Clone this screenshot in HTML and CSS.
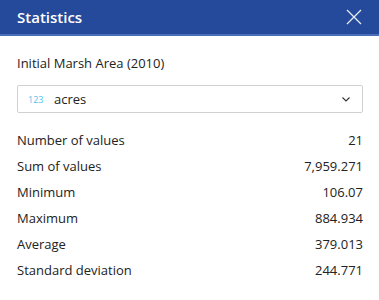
FILE: index.html
```html
<!DOCTYPE html>
<html lang="en">
<head>
    <meta charset="UTF-8">
    <meta name="viewport" content="width=device-width, initial-scale=1.0">
    <title>Statistics</title>
    <link rel="stylesheet" href="styles.css">
</head>
<body>

    <div class="panel">
        <div class="header">
            <h2>Statistics</h2>
            <button class="close" aria-label="Close">
                <svg width="16" height="16" viewBox="0 0 16 16">
                    <path d="M1 1 L15 15 M15 1 L1 15" stroke="#e8ecf6" stroke-width="1.3" fill="none"/>
                </svg>
            </button>
        </div>

        <div class="content">
            <p class="field-name">Initial Marsh Area (2010)</p>

            <!-- Field picker -->
            <div class="select">
                <span class="type">123</span>
                <span class="unit">acres</span>
                <svg class="chevron" width="8" height="5" viewBox="0 0 8 5">
                    <path d="M0.5 0.5 L4 4 L7.5 0.5" stroke="#333" stroke-width="1.1" fill="none"/>
                </svg>
            </div>

            <table class="stats">
                <tr><td>Number of values</td><td>21</td></tr>
                <tr><td>Sum of values</td><td>7,959.271</td></tr>
                <tr><td>Minimum</td><td>106.07</td></tr>
                <tr><td>Maximum</td><td>884.934</td></tr>
                <tr><td>Average</td><td>379.013</td></tr>
                <tr><td>Standard deviation</td><td>244.771</td></tr>
            </table>
        </div>
    </div>

</body>
</html>
```

FILE: styles.css
```css
body {
    margin: 0;
    font-family: "Open Sans", "Noto Sans", sans-serif;
    background-color: white;
    color: #222;
}

.panel {
    width: 379px;
}

.header {
    height: 34px;
    background-color: #254a9b;
    border-bottom: 2px solid #4a6fb8;
    display: flex;
    align-items: center;
    justify-content: space-between;
    padding: 0 17px;
}

.header h2 {
    margin: 0;
    font-size: 15px;
    font-weight: 600;
    color: white;
}

.close {
    background: none;
    border: none;
    padding: 0;
    width: 16px;
    height: 16px;
    cursor: pointer;
}

.content {
    padding: 0 16px 0 17px;
}

.field-name {
    margin: 17px 0 0;
    font-size: 13px;
    line-height: 20px;
}

.select {
    margin-top: 12px;
    height: 26px;
    border: 1px solid #d0d0d0;
    border-radius: 2px;
    display: flex;
    align-items: center;
    padding: 0 12px 0 10px;
    font-size: 13px;
}

.type {
    font-size: 9px;
    color: #4fc3ee;
    width: 26px;
}

.unit {
    flex: 1;
}

.stats {
    width: 100%;
    border-collapse: collapse;
    margin-top: 14px;
    font-size: 13px;
}

.stats td {
    padding: 0;
    height: 26px;
}

.stats td:last-child {
    text-align: right;
}
```
